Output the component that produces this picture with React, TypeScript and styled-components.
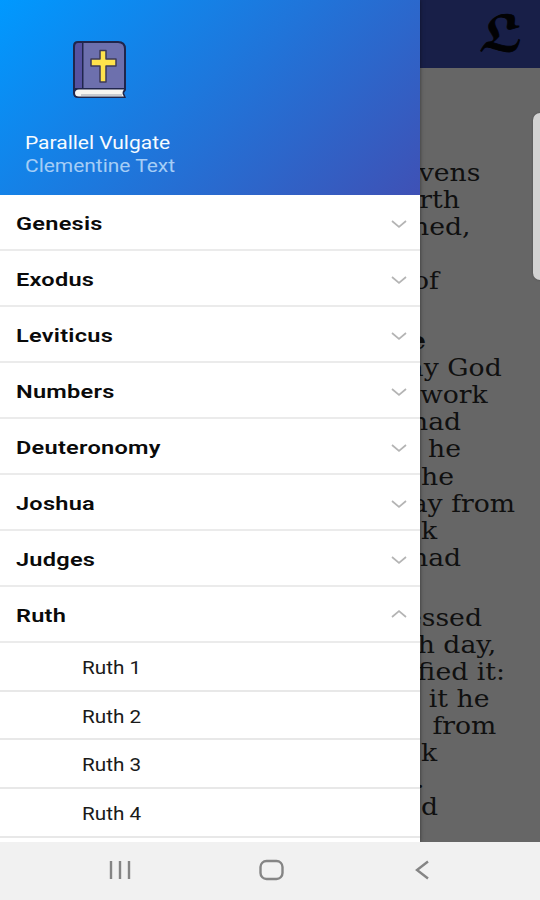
import React from "react";
import styled, { createGlobalStyle } from "styled-components";

const GlobalStyle = createGlobalStyle`
  body { margin: 0; overflow: hidden; }
  * { box-sizing: border-box; }
`;

const Screen = styled.div`
  position: relative;
  width: 540px;
  height: 900px;
  display: flex;
  flex-direction: column;
  overflow: hidden;
  background: #f1f1f1;
  font-family: Roboto, "Liberation Sans", sans-serif;
`;

const Reader = styled.main`
  position: relative;
  height: 842px;
  display: flex;
  flex-direction: column;
  overflow: hidden;
  background: #666;
`;

const AppBar = styled.header`
  flex: none;
  height: 68px;
  display: flex;
  justify-content: flex-end;
  padding: 14px 21px 0 0;
  background: #181f48;
`;

const Monogram = styled.span`
  width: 42px;
  height: 46px;
  text-align: center;
  font: 47px/46px "DejaVu Math TeX Gyre", serif;
  color: #020204;
  -webkit-text-stroke: 0.8px #020204;
`;

const Passage = styled.section`
  flex: none;
  display: flex;
  flex-direction: column;
  gap: 5.5px;
  padding-top: 92px;
`;

const Verse = styled.div`
  display: flex;
  flex-direction: column;
`;

const Line = styled.div<{ $end: number; $bold?: boolean }>`
  height: 27.1px;
  padding-right: ${(p) => 540 - p.$end}px;
  font: ${(p) => (p.$bold ? 700 : 400)} 23.5px/27px "DejaVu Serif", serif;
  color: #101010;
  text-align: right;
  white-space: nowrap;
`;

const Stretch = styled.span<{ $x: number; $right?: boolean }>`
  display: inline-block;
  transform: scaleX(${(p) => p.$x});
  transform-origin: ${(p) => (p.$right ? "right" : "left")} center;
  white-space: nowrap;
`;

const ScrollThumb = styled.div`
  position: absolute;
  top: 113px;
  right: -8px;
  width: 15px;
  height: 167px;
  border-radius: 7px;
  background: #d2d2d2;
  box-shadow: 0 0 2px #444;
`;

const Drawer = styled.aside`
  position: absolute;
  top: 0;
  left: 0;
  width: 420.4px;
  height: 842px;
  overflow: hidden;
  background: #fff;
  box-shadow: 0 0 4px rgba(0, 0, 0, 0.5);
`;

const DrawerHeader = styled.div`
  height: 195px;
  display: flex;
  flex-direction: column;
  padding: 40px 0 0 24.5px;
  background: linear-gradient(135deg, #0099ff 0%, #3f51b5 100%);
`;

const BookIcon = styled.svg`
  width: 56px;
  height: 60px;
  margin: 0 0 31px 47.5px;
`;

const Caption = styled.div<{ $soft?: boolean }>`
  height: 23px;
  font-size: 18px;
  line-height: 24px;
  font-weight: 400;
  color: ${(p) => (p.$soft ? "#a5cdf6" : "#f6fbff")};
`;

const BookRow = styled.div`
  height: 56px;
  display: flex;
  align-items: center;
  justify-content: space-between;
  padding: 2px 13px 0 15.7px;
  border-bottom: 2px solid #ebebeb;
  font-size: 19px;
  font-weight: 600;
  letter-spacing: 0.2px;
  color: #0a0a0a;
`;

const ChapterRow = styled.div`
  height: 48.7px;
  display: flex;
  align-items: center;
  padding: 2px 0 0 81.5px;
  border-bottom: 2px solid #e8e8e8;
  font-size: 18px;
  color: #1a1a1a;
`;

const Chevron = styled.svg<{ $up?: boolean }>`
  width: 16px;
  height: 9px;
  transform: ${(p) => (p.$up ? "translateY(-2px) rotate(180deg)" : "translateY(1px)")};
`;

const NavBar = styled.nav`
  height: 58px;
  display: flex;
  justify-content: center;
  gap: 126px;
  padding: 14px 0 0 2px;
`;

const NavIcon = styled.svg`
  width: 25px;
  height: 28px;
  fill: none;
  stroke: #858585;
  stroke-width: 2.4;
`;

type LineData = { text: string; end: number; bold?: boolean };
const verses: LineData[][] = [
  [
    { text: "vens", end: 480 },
    { text: "rth", end: 460 },
    { text: "hed,", end: 471 },
    { text: "", end: 400 },
    { text: "of", end: 439 },
    { text: "", end: 400 },
  ],
  [
    { text: "e", end: 426, bold: true },
    { text: "ay God", end: 502 },
    { text: "work", end: 488 },
    { text: "had", end: 461 },
    { text: "he", end: 461 },
    { text: "he", end: 454.5 },
    { text: "ay from", end: 515 },
    { text: "k", end: 437 },
    { text: "had", end: 461 },
    { text: "", end: 400 },
  ],
  [
    { text: "essed", end: 481.5 },
    { text: "h day,", end: 496 },
    { text: "fied it:", end: 504.5 },
    { text: "it he", end: 489 },
    { text: "from", end: 496 },
    { text: "k", end: 437 },
    { text: ".", end: 424 },
    { text: "d", end: 438 },
  ],
];

const books: { name: string; open?: boolean }[] = [
  { name: "Genesis" },
  { name: "Exodus" },
  { name: "Leviticus" },
  { name: "Numbers" },
  { name: "Deuteronomy" },
  { name: "Joshua" },
  { name: "Judges" },
  { name: "Ruth", open: true },
];

export default function App() {
  return (
    <>
      <GlobalStyle />
      <Screen>
        <Reader>
          <AppBar>
            <Monogram>𝕷</Monogram>
          </AppBar>
          <Passage>
            {verses.map((lines, i) => (
              <Verse key={i}>
                {lines.map((l, j) => (
                  <Line key={j} $end={l.end} $bold={l.bold}>
                    <Stretch $x={1.135} $right>{l.text}</Stretch>
                  </Line>
                ))}
              </Verse>
            ))}
          </Passage>
          <ScrollThumb />
          <Drawer>
            <DrawerHeader>
              <BookIcon viewBox="0 0 56 60">
                <path d="M6 1H46Q54 1 54 9V50L52 53L54 58H6Q1 58 1 53V6Q1 1 6 1Z" fill="#20264c" />
                <path d="M3 53Q3 49.5 7 49.5H52Q49 53 52 56.5H7Q3 56.5 3 53Z" fill="#f6f5f0" />
                <path d="M9 55H50" stroke="#b9bcc4" strokeWidth="1.4" />
                <path d="M6 3H10V48H3V7Q3 3 6 3Z" fill="#5552a0" />
                <path d="M11.5 3H46Q52 3 52 9V48H11.5Z" fill="#6d70ad" />
                <path d="M28 10.5H34V19H44V26H34V42H28V26H19V19H28Z" fill="#ffe34c" stroke="#3c3a58" strokeWidth="1.5" strokeLinejoin="round" />
              </BookIcon>
              <Caption><Stretch $x={1.165}>Parallel Vulgate</Stretch></Caption>
              <Caption $soft><Stretch $x={1.163}>Clementine Text</Stretch></Caption>
            </DrawerHeader>
            {books.map((b) => (
              <BookRow key={b.name}>
                <Stretch $x={1.24}>{b.name}</Stretch>
                <Chevron $up={b.open} viewBox="0 0 16 9">
                  <path d="M1 1L8 7L15 1" fill="none" stroke="#b4b4b4" strokeWidth="1.7" />
                </Chevron>
              </BookRow>
            ))}
            {[1, 2, 3, 4].map((n) => (
              <ChapterRow key={n}>
                <Stretch $x={1.15}>Ruth {n}</Stretch>
              </ChapterRow>
            ))}
          </Drawer>
        </Reader>
        <NavBar>
          <NavIcon viewBox="0 0 25 28">
            <path d="M3 5V23M12 5V23M21 5V23" />
          </NavIcon>
          <NavIcon viewBox="0 0 25 28">
            <rect x="1.5" y="5" width="22" height="18" rx="6" />
          </NavIcon>
          <NavIcon viewBox="0 0 25 28">
            <path d="M18 5.5L7 14L18 22.5" />
          </NavIcon>
        </NavBar>
      </Screen>
    </>
  );
}
